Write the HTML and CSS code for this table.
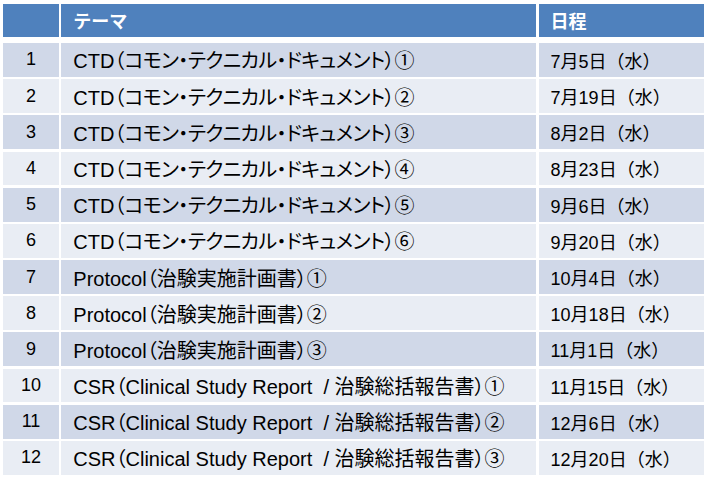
FILE: index.html
```html
<!DOCTYPE html>
<html lang="ja">
<head>
<meta charset="utf-8">
<link rel="stylesheet" href="styles.css">
</head>
<body>
<div class="table">
  <div class="row head">
    <div class="cell num"></div>
    <div class="cell">テーマ</div>
    <div class="cell">日程</div>
  </div>
  <div class="body">
    <div class="row odd"><div class="cell num">1</div><div class="cell theme">CTD（<span class="kana">コモン・テクニカル・ドキュメント</span>）①</div><div class="cell">7月5日（水）</div></div>
    <div class="row even"><div class="cell num">2</div><div class="cell theme">CTD（<span class="kana">コモン・テクニカル・ドキュメント</span>）②</div><div class="cell">7月19日（水）</div></div>
    <div class="row odd"><div class="cell num">3</div><div class="cell theme">CTD（<span class="kana">コモン・テクニカル・ドキュメント</span>）③</div><div class="cell">8月2日（水）</div></div>
    <div class="row even"><div class="cell num">4</div><div class="cell theme">CTD（<span class="kana">コモン・テクニカル・ドキュメント</span>）④</div><div class="cell">8月23日（水）</div></div>
    <div class="row odd"><div class="cell num">5</div><div class="cell theme">CTD（<span class="kana">コモン・テクニカル・ドキュメント</span>）⑤</div><div class="cell">9月6日（水）</div></div>
    <div class="row even"><div class="cell num">6</div><div class="cell theme">CTD（<span class="kana">コモン・テクニカル・ドキュメント</span>）⑥</div><div class="cell">9月20日（水）</div></div>
    <div class="row odd"><div class="cell num">7</div><div class="cell theme">Protocol（治験実施計画書）①</div><div class="cell">10月4日（水）</div></div>
    <div class="row even"><div class="cell num">8</div><div class="cell theme">Protocol（治験実施計画書）②</div><div class="cell">10月18日（水）</div></div>
    <div class="row odd"><div class="cell num">9</div><div class="cell theme">Protocol（治験実施計画書）③</div><div class="cell">11月1日（水）</div></div>
    <div class="row even"><div class="cell num">10</div><div class="cell theme">CSR（Clinical Study Report&nbsp; / 治験総括報告書）①</div><div class="cell">11月15日（水）</div></div>
    <div class="row odd"><div class="cell num">11</div><div class="cell theme">CSR（Clinical Study Report&nbsp; / 治験総括報告書）②</div><div class="cell">12月6日（水）</div></div>
    <div class="row even"><div class="cell num">12</div><div class="cell theme">CSR（Clinical Study Report&nbsp; / 治験総括報告書）③</div><div class="cell">12月20日（水）</div></div>
  </div>
</div>
</body>
</html>
```
FILE: styles.css
```css
html, body {
  margin: 0;
  padding: 0;
  background: #ffffff;
}
body {
  width: 704px;
  height: 480px;
  overflow: hidden;
  font-family: "Liberation Sans", "Noto Sans CJK JP", sans-serif;
  font-size: 18px;
  color: #000000;
}
.table {
  padding: 4px 0 0 3px;
}
.row {
  display: grid;
  grid-template-columns: 56px 475px 1fr;
  column-gap: 2.3px;
}
.head {
  height: 32.7px;
  margin-bottom: 6.3px;
}
.head .cell {
  background: #4f81bd;
  color: #ffffff;
  font-weight: bold;
}
.body {
  display: grid;
  grid-auto-rows: 33.8px;
  row-gap: 2.4px;
}
.cell {
  display: flex;
  align-items: center;
  padding-left: 12px;
  white-space: nowrap;
}
.cell.theme {
  font-size: 20px;
  font-feature-settings: "palt";
}
.kana {
  letter-spacing: -0.6px;
}
.cell.num {
  justify-content: center;
  padding-left: 0;
}
.odd .cell {
  background: #d0d8e8;
}
.even .cell {
  background: #e9edf4;
}
```
